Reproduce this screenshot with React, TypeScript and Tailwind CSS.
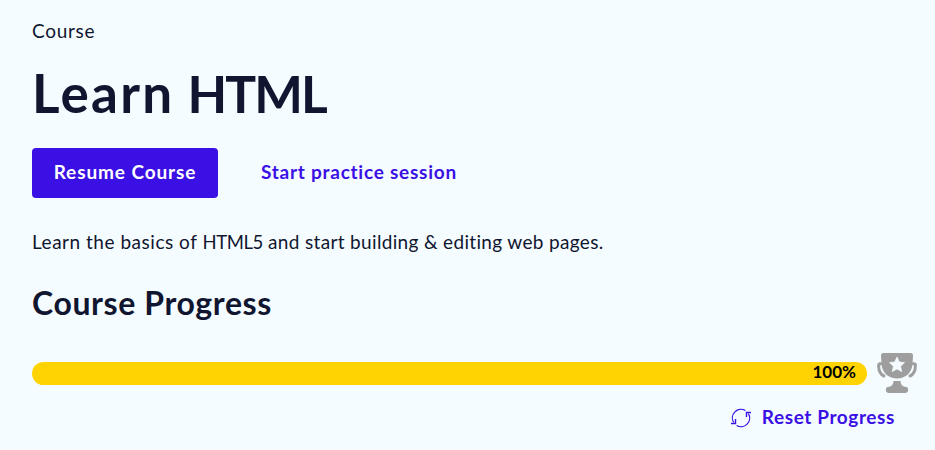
function TrophyIcon() {
  return (
    <svg className="h-10 w-10 shrink-0" viewBox="0 0 40 40" fill="none">
      <path d="M4.500 10.800H3Q1.600 10.800 1.600 12.300C1.600 18 3.500 21.500 7 23M35.500 10.800H37q1.400 0 1.400 1.500c0 5.700-1.900 9.200-5.400 10.700" stroke="#9e9e9e" strokeWidth="3" strokeLinecap="round" />
      <path d="M6.500 0h27q2.700 0 2.500 3l-.5 8C35 20 28 25.500 20 25.500S5 20 4.500 11L4 3q-.2-3 2.500-3Z" fill="#9e9e9e" />
      <path d="M16.500 28h7c0 3 1.500 5 4 5.700h.5a3.150 3.150 0 0 1 0 6.300H12a3.150 3.150 0 0 1 0-6.300h.5c2.500-.7 4-2.700 4-5.700Z" fill="#9e9e9e" />
      <path d="m20 4 2.300 5 5.200.600-3.900 3.700 1.100 5.300-4.700-2.700-4.700 2.700 1.100-5.300-3.900-3.700 5.200-.6Z" fill="#f5fcff" stroke="#f5fcff" strokeWidth=".7" strokeLinejoin="round" />
    </svg>
  );
}

function ResetIcon() {
  return (
    <svg className="h-5 w-5 shrink-0" viewBox="0 0 20 20" fill="none" stroke="#3a10e5" strokeWidth="1.2">
      <path d="M2.600 14.400A8.600 8.600 0 0 1 14.400 2.600M17.400 5.600A8.600 8.600 0 0 1 5.600 17.400" />
      <path d="M0 15.500h4.500v-4.500M20 4.500h-4.500V9" strokeWidth="1.400" />
    </svg>
  );
}

export default function App() {
  return (
    <main className="h-[450px] w-[935px] overflow-hidden bg-[#f5fcff] pl-8 font-['Lato',sans-serif] text-[#10162f] [font-variant-ligatures:none]">
      <p className="pt-[17px] text-[19px] leading-7 tracking-[0.7px]">Course</p>
      <h1 className="mt-[13px] text-[53px] leading-[70px] font-bold">
        <span className="tracking-[2.3px]">Learn</span> <span className="text-[51.5px] tracking-[-1.9px]">HTML</span>
      </h1>
      <div className="mt-5 flex h-[50px] items-center gap-[43px] text-[19px] font-bold">
        <button className="h-[50px] w-[186px] rounded-[4px] bg-[#3a10e5] pb-0.5 tracking-[0.9px] text-white">Resume Course</button>
        <button className="pb-0.5 tracking-[0.75px] text-[#3a10e5]">Start practice session</button>
      </div>
      <p className="mt-[30px] text-[19px] leading-7 tracking-[0.34px]">
        <span className="tracking-[0.52px]">Learn the basics of </span>
        <span className="text-[18.5px] tracking-[-0.4px]">HTML5</span> and start building &amp; editing web pages.
      </p>
      <h2 className="mt-[27px] text-[32px] leading-10 font-bold tracking-[0.6px]">Course Progress</h2>
      <div className="mt-[30px] flex h-10 items-center gap-[10px]">
        <div className="flex h-[23px] w-[835px] items-center justify-end rounded-full bg-[#ffd300] pr-[11px] pb-0.5 text-[17px] font-bold text-black">100%</div>
        <TrophyIcon />
      </div>
      <div className="mt-[11px] flex justify-end pr-[40px]">
        <button className="flex h-7 items-center gap-[11px] text-[19px] font-bold tracking-[0.6px] text-[#3a10e5]">
          <ResetIcon />
          <span className="pb-0.5">Reset Progress</span>
        </button>
      </div>
    </main>
  );
}
